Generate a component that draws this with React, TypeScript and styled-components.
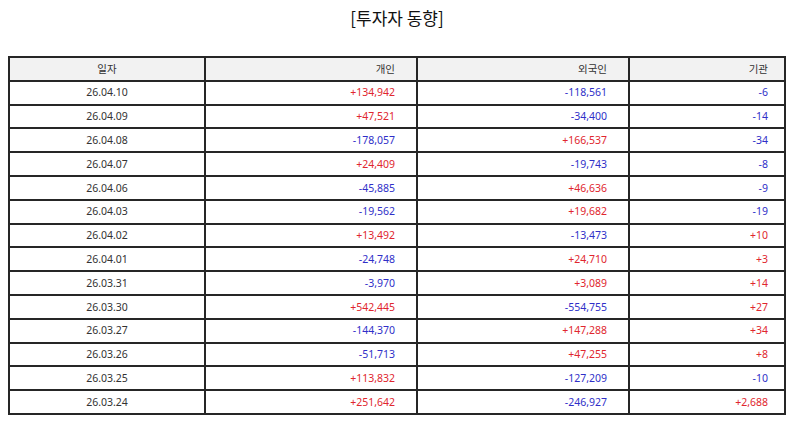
import React from "react";
import styled, { createGlobalStyle } from "styled-components";

const Global = createGlobalStyle`
  html, body { margin: 0; padding: 0; background: #fff; }
  body { font-family: "Noto Sans", "Noto Sans CJK KR", sans-serif; }
`;

const Page = styled.div`
  width: 794px;
  height: 425px;
  display: flex;
  flex-direction: column;
  align-items: center;
  padding-top: 6px;
  box-sizing: border-box;
`;

const Title = styled.h1`
  margin: 0;
  font-family: "Noto Sans CJK KR", sans-serif;
  font-size: 17px;
  font-weight: 400;
  line-height: 24px;
  color: #111;
`;

const Table = styled.table`
  margin-top: 26px;
  width: 776px;
  border-collapse: collapse;
  table-layout: fixed;
  font-size: 10.5px;
  color: #333;
`;

const Row = styled.tr`
  height: 23.8px;
`;

const Cell = styled.td<{ $align: "center" | "right"; $pad: number; $tone?: "up" | "down"; $head?: boolean }>`
  border: 2px solid #262626;
  padding: 0 ${(p) => p.$pad}px 0 0;
  text-align: ${(p) => p.$align};
  background: ${(p) => (p.$head ? "#f2f2f2" : "#fff")};
  color: ${(p) => (p.$tone === "up" ? "#e0262e" : p.$tone === "down" ? "#2f2fc8" : "#333")};
  font-weight: 400;
  line-height: 1;
  white-space: nowrap;
`;

const cols = [
  { label: "일자", width: 196, align: "center" as const },
  { label: "개인", width: 212, align: "right" as const },
  { label: "외국인", width: 212, align: "right" as const },
  { label: "기관", width: 156, align: "right" as const },
];

const data: [string, string, string, string][] = [
  ["26.04.10", "+134,942", "-118,561", "-6"],
  ["26.04.09", "+47,521", "-34,400", "-14"],
  ["26.04.08", "-178,057", "+166,537", "-34"],
  ["26.04.07", "+24,409", "-19,743", "-8"],
  ["26.04.06", "-45,885", "+46,636", "-9"],
  ["26.04.03", "-19,562", "+19,682", "-19"],
  ["26.04.02", "+13,492", "-13,473", "+10"],
  ["26.04.01", "-24,748", "+24,710", "+3"],
  ["26.03.31", "-3,970", "+3,089", "+14"],
  ["26.03.30", "+542,445", "-554,755", "+27"],
  ["26.03.27", "-144,370", "+147,288", "+34"],
  ["26.03.26", "-51,713", "+47,255", "+8"],
  ["26.03.25", "+113,832", "-127,209", "-10"],
  ["26.03.24", "+251,642", "-246,927", "+2,688"],
];

const tone = (v: string) => (v.startsWith("+") ? "up" : v.startsWith("-") ? "down" : undefined);
const padFor = (i: number) => (cols[i].align === "right" ? Math.round(cols[i].width * 0.1) : 0);

export default function App() {
  return (
    <>
      <Global />
      <Page>
        <Title>[투자자 동향]</Title>
        <Table>
          <colgroup>
            {cols.map((c) => (
              <col key={c.label} style={{ width: c.width }} />
            ))}
          </colgroup>
          <thead>
            <Row>
              {cols.map((c, i) => (
                <Cell as="th" key={c.label} $align={c.align} $pad={padFor(i)} $head>
                  {c.label}
                </Cell>
              ))}
            </Row>
          </thead>
          <tbody>
            {data.map((r) => (
              <Row key={r[0]}>
                {r.map((v, i) => (
                  <Cell key={i} $align={cols[i].align} $pad={padFor(i)} $tone={i === 0 ? undefined : tone(v)}>
                    {v}
                  </Cell>
                ))}
              </Row>
            ))}
          </tbody>
        </Table>
      </Page>
    </>
  );
}
